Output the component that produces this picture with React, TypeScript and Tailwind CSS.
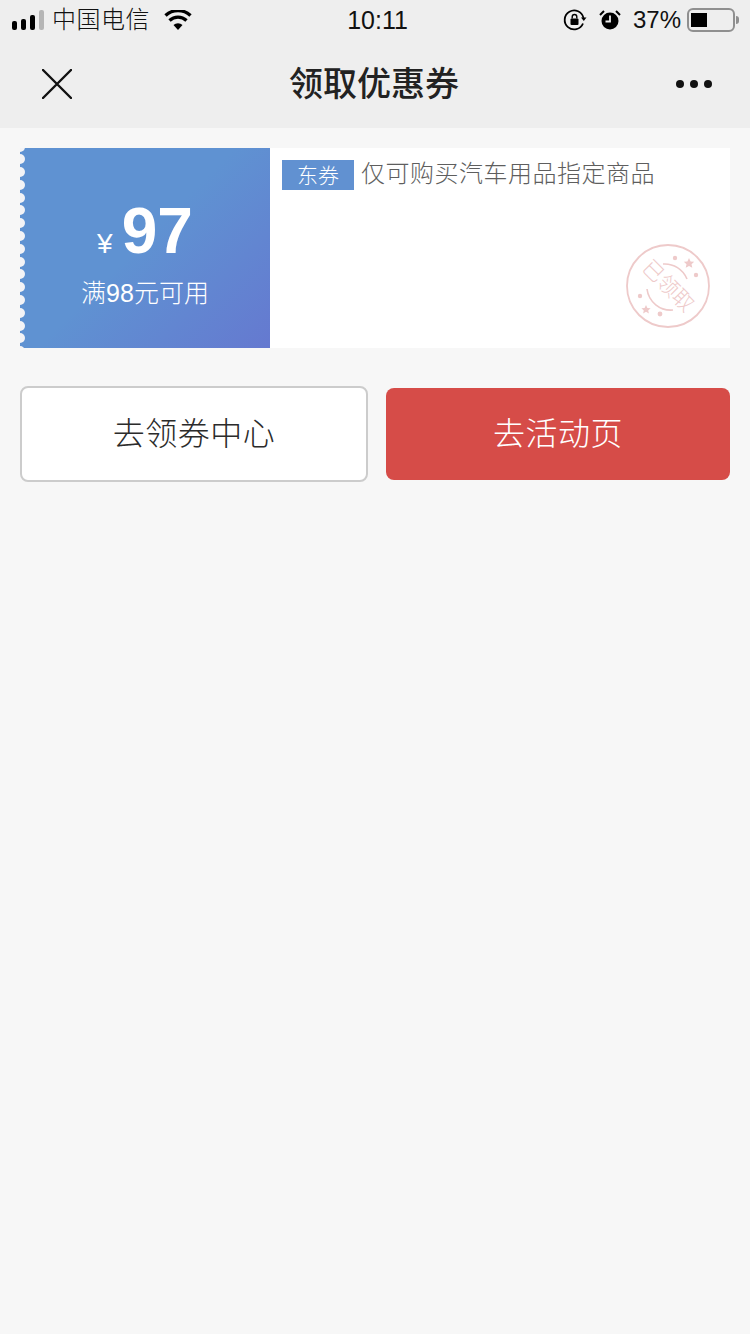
const cjk = "font-['Liberation_Sans','Noto_Sans_CJK_SC',sans-serif]";
const notches = Array.from({ length: 17 }, (_, i) => i);

function StatusBar() {
  return (
    <div className={`flex h-10 items-center justify-between pl-3 pr-[11px] text-[#111] ${cjk}`}>
      <div className="flex w-[300px] items-center">
        <div className="flex items-end gap-[4px]">
          <span className="h-[9px] w-[5px] rounded-[2px] bg-black" />
          <span className="h-[11px] w-[5px] rounded-[2px] bg-black" />
          <span className="h-[15px] w-[5px] rounded-[2px] bg-black" />
          <span className="h-[20px] w-[5px] rounded-[2px] bg-[#b5b5b5]" />
        </div>
        <span className="ml-[8px] text-[24px] font-light leading-none tracking-[0.5px]">中国电信</span>
        <svg viewBox="0 0 28 20" className="ml-[14px] h-5 w-7">
          <path d="M14 20l-4.5-5a6.5 6.5 0 0 1 9 0z" fill="#000" />
          <path d="M5.5 10.5a12.5 12.5 0 0 1 17 0" stroke="#000" strokeWidth="3.4" fill="none" />
          <path d="M1.5 5.5a18.5 18.5 0 0 1 25 0" stroke="#000" strokeWidth="3.4" fill="none" />
        </svg>
      </div>
      <span className="ml-[4px] text-[25px] leading-none">10:11</span>
      <div className="flex w-[300px] items-center justify-end">
        <svg viewBox="0 0 24 24" className="h-[24px] w-[24px]">
          <path d="M20 15.5A9.5 9.5 0 1 1 20.5 10" stroke="#000" strokeWidth="1.8" fill="none" />
          <path d="M18 9.5h5.5l-2.7 3.5z" fill="#000" />
          <rect x="7.5" y="10.5" width="8" height="6.5" rx="1" fill="#000" />
          <path d="M9.2 10.5V8.8a2.3 2.3 0 0 1 4.6 0v1.7" stroke="#000" strokeWidth="1.4" fill="none" />
        </svg>
        <svg viewBox="0 0 22 22" className="ml-[12px] h-[22px] w-[22px]">
          <circle cx="11" cy="12" r="8.5" fill="#000" />
          <path d="M11 6.5V12.5H6.5" stroke="#eee" strokeWidth="1.8" fill="none" />
          <path d="M1 6l4-4M21 6l-4-4" stroke="#000" strokeWidth="2" />
        </svg>
        <span className="ml-[12px] text-[24px] font-light leading-none">37%</span>
        <div className="ml-[6px] flex h-[24px] w-[48px] items-center rounded-[6px] border-2 border-[#8f8f8f] p-[2px]">
          <span className="h-[14px] w-[16px] bg-black" />
        </div>
        <span className="ml-[1px] h-[8px] w-[3px] rounded-r-full bg-[#8f8f8f]" />
      </div>
    </div>
  );
}

function NavBar() {
  return (
    <div className="flex h-[88px] items-center justify-between pb-[1px] pl-[42px] pr-[38px]">
      <svg viewBox="0 0 30 30" className="h-[30px] w-[30px]">
        <path d="M1 1l28 28M29 1L1 29" stroke="#111" strokeWidth="2.4" strokeLinecap="round" />
      </svg>
      <h1 className={`text-[34px] font-medium leading-none text-[#222] ${cjk}`}>领取优惠券</h1>
      <div className="flex w-[36px] justify-between">
        <span className="h-[8px] w-[8px] rounded-full bg-[#111]" />
        <span className="h-[8px] w-[8px] rounded-full bg-[#111]" />
        <span className="h-[8px] w-[8px] rounded-full bg-[#111]" />
      </div>
    </div>
  );
}

function Stamp() {
  return (
    <svg viewBox="0 0 84 84" className="absolute bottom-[20px] right-[20px] h-[84px] w-[84px]">
      <circle cx="42" cy="42" r="41" fill="none" stroke="#eecaca" strokeWidth="1.8" />
      <path d="M37 20a24 24 0 0 1 24 15" fill="none" stroke="#eecaca" strokeWidth="1.6" />
      <path d="M21 45a24 24 0 0 0 26 21" fill="none" stroke="#eecaca" strokeWidth="1.6" />
      <g fill="#eecaca">
        <path d="M63 14l1.6 3.4 3.6.4-2.7 2.4.8 3.6-3.3-1.9-3.3 1.9.8-3.6-2.7-2.4 3.6-.4z" />
        <circle cx="49" cy="14" r="2.2" />
        <circle cx="70" cy="31" r="2.2" />
        <circle cx="14" cy="52" r="2.2" />
        <path d="M20 61l1.4 3 3.2.3-2.4 2.1.7 3.1-2.9-1.7-2.9 1.7.7-3.1-2.4-2.1 3.2-.3z" />
        <circle cx="34" cy="70" r="2.4" />
      </g>
      <text
        x="42"
        y="49"
        textAnchor="middle"
        transform="rotate(45 42 42)"
        fontSize="21"
        fill="#eecaca"
        fontFamily="'Noto Sans CJK SC', sans-serif"
        fontWeight="300"
      >
        已领取
      </text>
    </svg>
  );
}

function Coupon() {
  return (
    <div className={`flex h-[200px] ${cjk}`}>
      <div className="relative flex w-[250px] flex-col items-center overflow-hidden bg-[linear-gradient(135deg,#5f92d2_0%,#5f92d2_48%,#6579d0_100%)] pt-[47px] text-white">
        <div className="absolute left-[-5px] top-[-6.5px] flex flex-col gap-[2.8px]">
          {notches.map((n) => (
            <span key={n} className="h-[10px] w-[10px] rounded-full bg-[#f3f3f6]" />
          ))}
        </div>
        <div className="flex items-baseline">
          <span className="mr-[9px] text-[28px] font-light leading-none">¥</span>
          <span className="text-[64px] font-bold leading-[72px]">97</span>
        </div>
        <span className="mt-[9px] text-[25px] font-light leading-[34px]">满98元可用</span>
      </div>
      <div className="relative flex-1 bg-white pl-3 pt-[12px]">
        <div className="flex items-center">
          <span className="flex h-[30px] w-[72px] items-center justify-center bg-[#6191d1] text-[21px] font-light leading-none text-white">
            东券
          </span>
          <span className="-mt-[2px] ml-[7px] text-[24px] font-light leading-none tracking-[0.5px] text-[#5e5e5e]">
            仅可购买汽车用品指定商品
          </span>
        </div>
        <Stamp />
      </div>
    </div>
  );
}

export default function App() {
  return (
    <div className="flex min-h-[1334px] flex-col bg-[#f7f7f7]">
      <div className="bg-[#eeeeee]">
        <StatusBar />
        <NavBar />
      </div>
      <div className="px-5 pt-5">
        <Coupon />
        <div className={`mt-[38px] flex items-center gap-[18px] ${cjk}`}>
          <button className="h-[96px] w-[348px] rounded-[8px] border-2 border-[#cccccc] bg-white text-[32px] font-light tracking-[0.5px] text-[#2b2b2b]">
            去领券中心
          </button>
          <button className="h-[92px] w-[344px] rounded-[8px] bg-[#d64c48] text-[32px] font-light tracking-[0.5px] text-white">
            去活动页
          </button>
        </div>
      </div>
    </div>
  );
}
